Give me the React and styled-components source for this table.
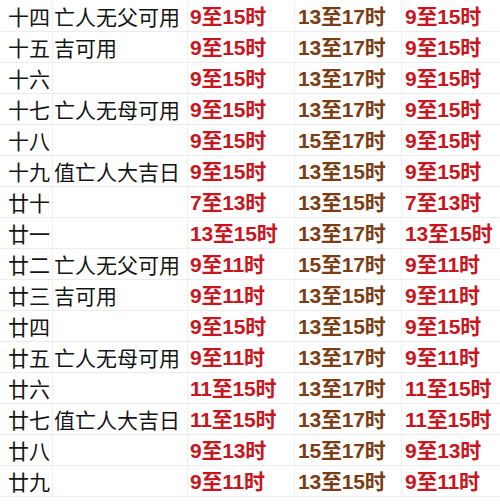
import React from 'react';
import styled, { createGlobalStyle } from 'styled-components';

const GlobalStyle = createGlobalStyle`
  html, body {
    margin: 0;
    padding: 0;
    background: #ffffff;
  }
`;

const Sheet = styled.div`
  width: 500px;
  height: 504px;
  overflow: hidden;
  padding-top: 1px;
  box-sizing: border-box;
  background: #fff;
`;

const Row = styled.div`
  display: grid;
  grid-template-columns: 53px 135px 107px 107px 110px;
  height: 31px;
  border-bottom: 1px solid #ececec;
  box-sizing: border-box;
`;

const Cell = styled.div`
  height: 30px;
  line-height: 31px;
  white-space: nowrap;
  overflow: visible;
  border-right: 1px solid #f0f0f0;
  box-sizing: border-box;
  padding-left: ${p => p.$pad ?? 2}px;
`;

const Day = styled(Cell)`
  font-family: "Noto Sans CJK SC", sans-serif;
  font-size: 21px;
  color: #141414;
  padding-left: 8px;
`;

const Note = styled(Cell)`
  font-family: "Noto Sans CJK SC", sans-serif;
  font-size: 21px;
  color: #141414;
  padding-left: 1px;
`;

const Time = styled(Cell)`
  font-family: "Liberation Sans", "Noto Sans CJK SC", sans-serif;
  font-weight: 700;
  font-size: 21px;
  color: ${p => (p.$brown ? '#7a3d14' : '#c8161e')};
  letter-spacing: -0.2px;
`;

const rows = [
  ['十四', '亡人无父可用', '9至15时', '13至17时', '9至15时'],
  ['十五', '吉可用', '9至15时', '13至17时', '9至15时'],
  ['十六', '', '9至15时', '13至17时', '9至15时'],
  ['十七', '亡人无母可用', '9至15时', '13至17时', '9至15时'],
  ['十八', '', '9至15时', '15至17时', '9至15时'],
  ['十九', '值亡人大吉日', '9至15时', '13至15时', '9至15时'],
  ['廿十', '', '7至13时', '13至15时', '7至13时'],
  ['廿一', '', '13至15时', '13至17时', '13至15时'],
  ['廿二', '亡人无父可用', '9至11时', '15至17时', '9至11时'],
  ['廿三', '吉可用', '9至11时', '13至15时', '9至11时'],
  ['廿四', '', '9至15时', '13至15时', '9至15时'],
  ['廿五', '亡人无母可用', '9至11时', '13至17时', '9至11时'],
  ['廿六', '', '11至15时', '13至17时', '11至15时'],
  ['廿七', '值亡人大吉日', '11至15时', '13至17时', '11至15时'],
  ['廿八', '', '9至13时', '15至17时', '9至13时'],
  ['廿九', '', '9至11时', '13至15时', '9至11时'],
];

export default function App() {
  return (
    <>
      <GlobalStyle />
      <Sheet>
        {rows.map(([day, note, a, b, c], i) => (
          <Row key={i}>
            <Day>{day}</Day>
            <Note>{note}</Note>
            <Time>{a}</Time>
            <Time $brown $pad={3}>{b}</Time>
            <Time $pad={3}>{c}</Time>
          </Row>
        ))}
      </Sheet>
    </>
  );
}
